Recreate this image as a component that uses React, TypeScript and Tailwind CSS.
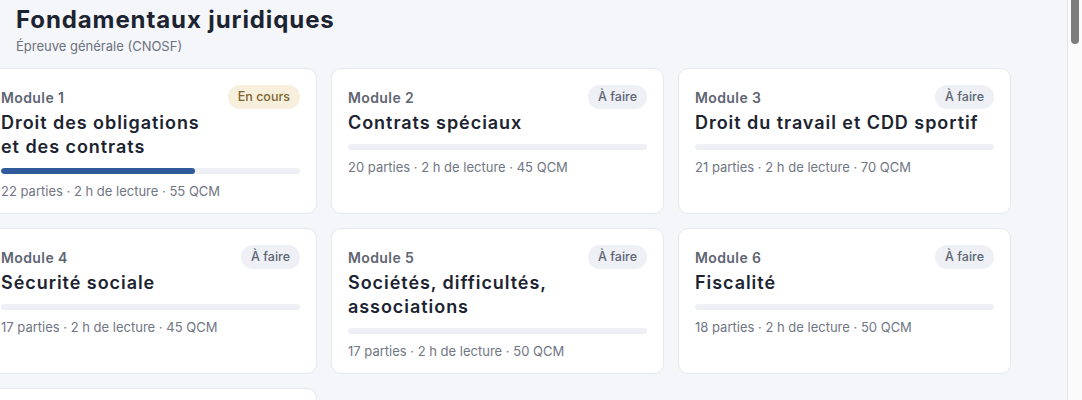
import React from 'react';

type Module = {
  num: number;
  title: string;
  status: 'En cours' | 'À faire';
  progress: number;
  parts: number;
  qcm: number;
};

const modules: Module[] = [
  { num: 1, title: 'Droit des obligations\net des contrats', status: 'En cours', progress: 65, parts: 22, qcm: 55 },
  { num: 2, title: 'Contrats spéciaux', status: 'À faire', progress: 0, parts: 20, qcm: 45 },
  { num: 3, title: 'Droit du travail et CDD sportif', status: 'À faire', progress: 0, parts: 21, qcm: 70 },
  { num: 4, title: 'Sécurité sociale', status: 'À faire', progress: 0, parts: 17, qcm: 45 },
  { num: 5, title: 'Sociétés, difficultés,\nassociations', status: 'À faire', progress: 0, parts: 17, qcm: 50 },
  { num: 6, title: 'Fiscalité', status: 'À faire', progress: 0, parts: 18, qcm: 50 },
  { num: 7, title: 'Propriété intellectuelle', status: 'À faire', progress: 0, parts: 16, qcm: 40 },
];

function StatusBadge({ status }: { status: Module['status'] }) {
  const active = status === 'En cours';
  return (
    <span
      className={`rounded-full px-[10px] h-6 flex items-center text-[12.5px] font-medium ${
        active ? 'bg-[#f7efdc] text-[#7a6431]' : 'bg-[#eef0f5] text-[#5d6473]'
      }`}
    >
      {status}
    </span>
  );
}

function ModuleCard({ mod }: { mod: Module }) {
  return (
    <div className="bg-white border border-[#e5e8ee] rounded-[10px] px-4 pt-4 pb-3">
      <div className="flex items-center justify-between h-6">
        <span className="text-[14px] font-semibold text-[#5e6572] tracking-[0.4px]">
          Module {mod.num}
        </span>
        <StatusBadge status={mod.status} />
      </div>
      <h3 className="mt-[2px] text-[18px] leading-6 font-semibold text-[#1c2331] whitespace-pre-line tracking-[0.95px]">
        {mod.title}
      </h3>
      <div className="mt-[9px] h-[6px] rounded-full bg-[#eef0f5] overflow-hidden">
        {mod.progress > 0 && (
          <div className="h-full bg-[#2f5b9b] rounded-full" style={{ width: `${mod.progress}%` }} />
        )}
      </div>
      <p className="mt-[7px] text-[13px] leading-5 text-[#707683]">
        {mod.parts} parties · 2 h de lecture · {mod.qcm} QCM
      </p>
    </div>
  );
}

export default function App() {
  return (
    <div
      className="h-[400px] flex overflow-hidden bg-[#f5f6f9]"
      style={{ fontFamily: 'Inter, "Liberation Sans", sans-serif' }}
    >
      <main className="flex-1 min-w-0 overflow-hidden">
        <header className="pl-4 pt-1">
          <h1 className="text-[24px] leading-8 font-bold text-[#1c2331] tracking-[0.9px]">Fondamentaux juridiques</h1>
          <p className="text-[13px] leading-5 text-[#6b717e]">Épreuve générale (CNOSF)</p>
        </header>
        <div className="mt-[12px] ml-[-16px] w-[1027px] grid grid-cols-3 gap-[14px]">
          {modules.map((m) => (
            <ModuleCard key={m.num} mod={m} />
          ))}
        </div>
      </main>
      {/* scrollbar */}
      <div className="w-[15px] shrink-0 bg-[#fbfbfb] border-l border-[#e4e4e4]">
        <div className="ml-[3px] w-[8px] h-[44px] bg-[#7d7d7d] rounded-b-full" />
      </div>
    </div>
  );
}
